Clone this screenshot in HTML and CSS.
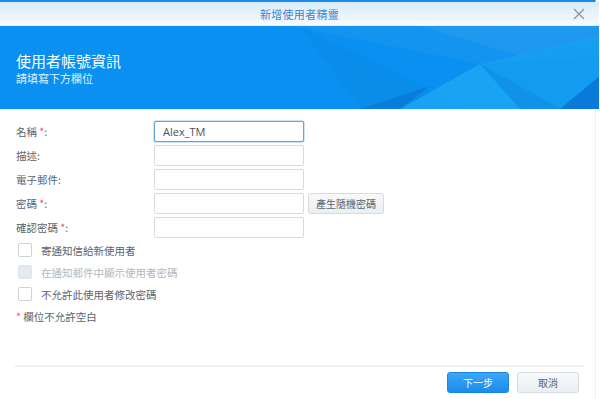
FILE: index.html
```html
<!DOCTYPE html>
<html lang="zh-Hant">
<head>
    <meta charset="UTF-8">
    <title>新增使用者精靈</title>
    <link rel="stylesheet" href="styles.css">
</head>
<body>
    <div class="wizard">
        <div class="titlebar">
            <span class="title">新增使用者精靈</span>
            <span class="close">
                <svg width="12" height="12" viewBox="0 0 12 12"><path d="M1 1 L11 11 M11 1 L1 11" stroke="#8f959c" stroke-width="1.3" fill="none"/></svg>
            </span>
        </div>

        <div class="banner">
            <svg class="facets" width="600" height="83" viewBox="0 0 600 83" preserveAspectRatio="none">
                <polygon points="290,0 600,0 600,30 480,38" fill="#ffffff" opacity="0.04"/>
                <polygon points="420,0 600,0 600,12 520,30" fill="#ffffff" opacity="0.05"/>
                <polygon points="300,0 360,83 470,83" fill="#000000" opacity="0.02"/>
                <polygon points="480,38 600,10 600,50 560,83" fill="#1aa8f0" opacity="0.5"/>
                <polygon points="400,83 480,38 560,83" fill="#25b5f5" opacity="0.55"/>
                <polygon points="360,83 430,60 400,83" fill="#0b76d6" opacity="0.7"/>
                <polygon points="480,38 520,83 560,83" fill="#0a7fe0" opacity="0.5"/>
                <polygon points="560,83 600,50 600,83" fill="#0870d0" opacity="0.7"/>
            </svg>
            <div class="banner-text">
                <div class="banner-title">使用者帳號資訊</div>
                <div class="banner-sub">請填寫下方欄位</div>
            </div>
        </div>

        <div class="form">
            <div class="row">
                <label class="label">名稱 <span class="req">*</span>:</label>
                <div class="field field-active">Alex_TM</div>
            </div>
            <div class="row">
                <label class="label">描述:</label>
                <div class="field"></div>
            </div>
            <div class="row">
                <label class="label">電子郵件:</label>
                <div class="field"></div>
            </div>
            <div class="row">
                <label class="label">密碼 <span class="req">*</span>:</label>
                <div class="field"></div>
                <button class="btn-gen">產生隨機密碼</button>
            </div>
            <div class="row">
                <label class="label">確認密碼 <span class="req">*</span>:</label>
                <div class="field"></div>
            </div>

            <div class="checks">
                <div class="check"><span class="box"></span>寄通知信給新使用者</div>
                <div class="check disabled"><span class="box"></span>在通知郵件中顯示使用者密碼</div>
                <div class="check"><span class="box"></span>不允許此使用者修改密碼</div>
            </div>

            <div class="note"><span class="req">*</span> 欄位不允許空白</div>
        </div>

        <div class="footer">
            <button class="btn primary">下一步</button>
            <button class="btn">取消</button>
        </div>
    </div>
</body>
</html>
```

FILE: styles.css
```css
* {
    margin: 0;
    padding: 0;
    box-sizing: border-box;
}

body {
    font-family: "Noto Sans CJK TC", "Noto Sans", sans-serif;
    background: #ffffff;
    color: #5a646e;
    width: 600px;
    height: 399px;
    overflow: hidden;
}

.wizard {
    height: 399px;
    display: flex;
    flex-direction: column;
    border-top: 2px solid #1b8be6;
    border-right: 1px solid #eef0f2;
    margin-right: 4px;
}

.titlebar {
    height: 24px;
    position: relative;
    display: flex;
    align-items: center;
    justify-content: center;
    background: linear-gradient(180deg, #d8ebfa 0%, #f6fafd 100%);
    border-bottom: 1px solid #e4eef7;
    margin-right: -4px;
}

.title {
    font-size: 11px;
    color: #3b86cf;
    letter-spacing: 0.3px;
}

.close {
    position: absolute;
    right: 14px;
    top: 6px;
    line-height: 0;
}

.banner {
    position: relative;
    height: 83px;
    background: #0a90f0;
    overflow: hidden;
    margin-right: -4px;
}

.facets {
    position: absolute;
    left: 0;
    top: 0;
}

.banner-text {
    position: relative;
    padding: 26px 0 0 16px;
    color: #ffffff;
}

.banner-title {
    font-size: 15px;
    font-weight: 400;
    line-height: 18px;
}

.banner-sub {
    font-size: 11px;
    line-height: 16px;
    color: #e2f1fd;
}

.form {
    flex: 1;
    padding: 10px 0 0 16px;
}

.row {
    display: flex;
    align-items: center;
    height: 24px;
}

.label {
    width: 138px;
    font-size: 10.5px;
    color: #5a646e;
}

.req {
    color: #f0506e;
}

.field {
    width: 150px;
    height: 21px;
    border: 1px solid #d6dbe0;
    border-radius: 2px;
    padding: 0 8px;
    font-family: "Open Sans", "Noto Sans", sans-serif;
    font-size: 11px;
    line-height: 19px;
    color: #4a545e;
    background: #ffffff;
}

.field-active {
    border: 1px solid #5ca6ea;
    box-shadow: 0 0 0 0.5px #9ccaf3;
}

.btn-gen {
    margin-left: 4px;
    height: 21px;
    width: 76px;
    border: 1px solid #d6dbe0;
    border-radius: 3px;
    background: linear-gradient(180deg, #f7f9fb 0%, #eaeff4 100%);
    font-family: inherit;
    font-size: 10px;
    color: #5a646e;
}

.checks {
    display: flex;
    flex-direction: column;
}

.check {
    display: flex;
    align-items: center;
    height: 22px;
    font-size: 10.5px;
    color: #5a646e;
}

.box {
    width: 14px;
    height: 14px;
    margin: 0 9px 0 2px;
    border: 1px solid #cdd3d9;
    border-radius: 2px;
    background: #ffffff;
}

.check.disabled {
    color: #b0b7be;
}

.check.disabled .box {
    background: #e5eaf0;
    border-color: #dde3e9;
}

.note {
    margin-top: 4px;
    font-size: 10.5px;
    color: #5a646e;
}

.footer {
    margin: 0 11px 0 15px;
    border-top: 2px solid #eeeff1;
    height: 34px;
    display: flex;
    justify-content: flex-end;
    align-items: flex-start;
    gap: 8px;
    padding: 5px 5px 0 0;
}

.btn {
    width: 62px;
    height: 21px;
    border: 1px solid #d6dbe0;
    border-radius: 3px;
    background: linear-gradient(180deg, #f7f9fb 0%, #eaeff4 100%);
    font-family: inherit;
    font-size: 10px;
    color: #5a646e;
}

.btn.primary {
    border-color: #1a86e0;
    background: linear-gradient(180deg, #3aa6f6 0%, #1b8ceb 100%);
    color: #ffffff;
}
```
